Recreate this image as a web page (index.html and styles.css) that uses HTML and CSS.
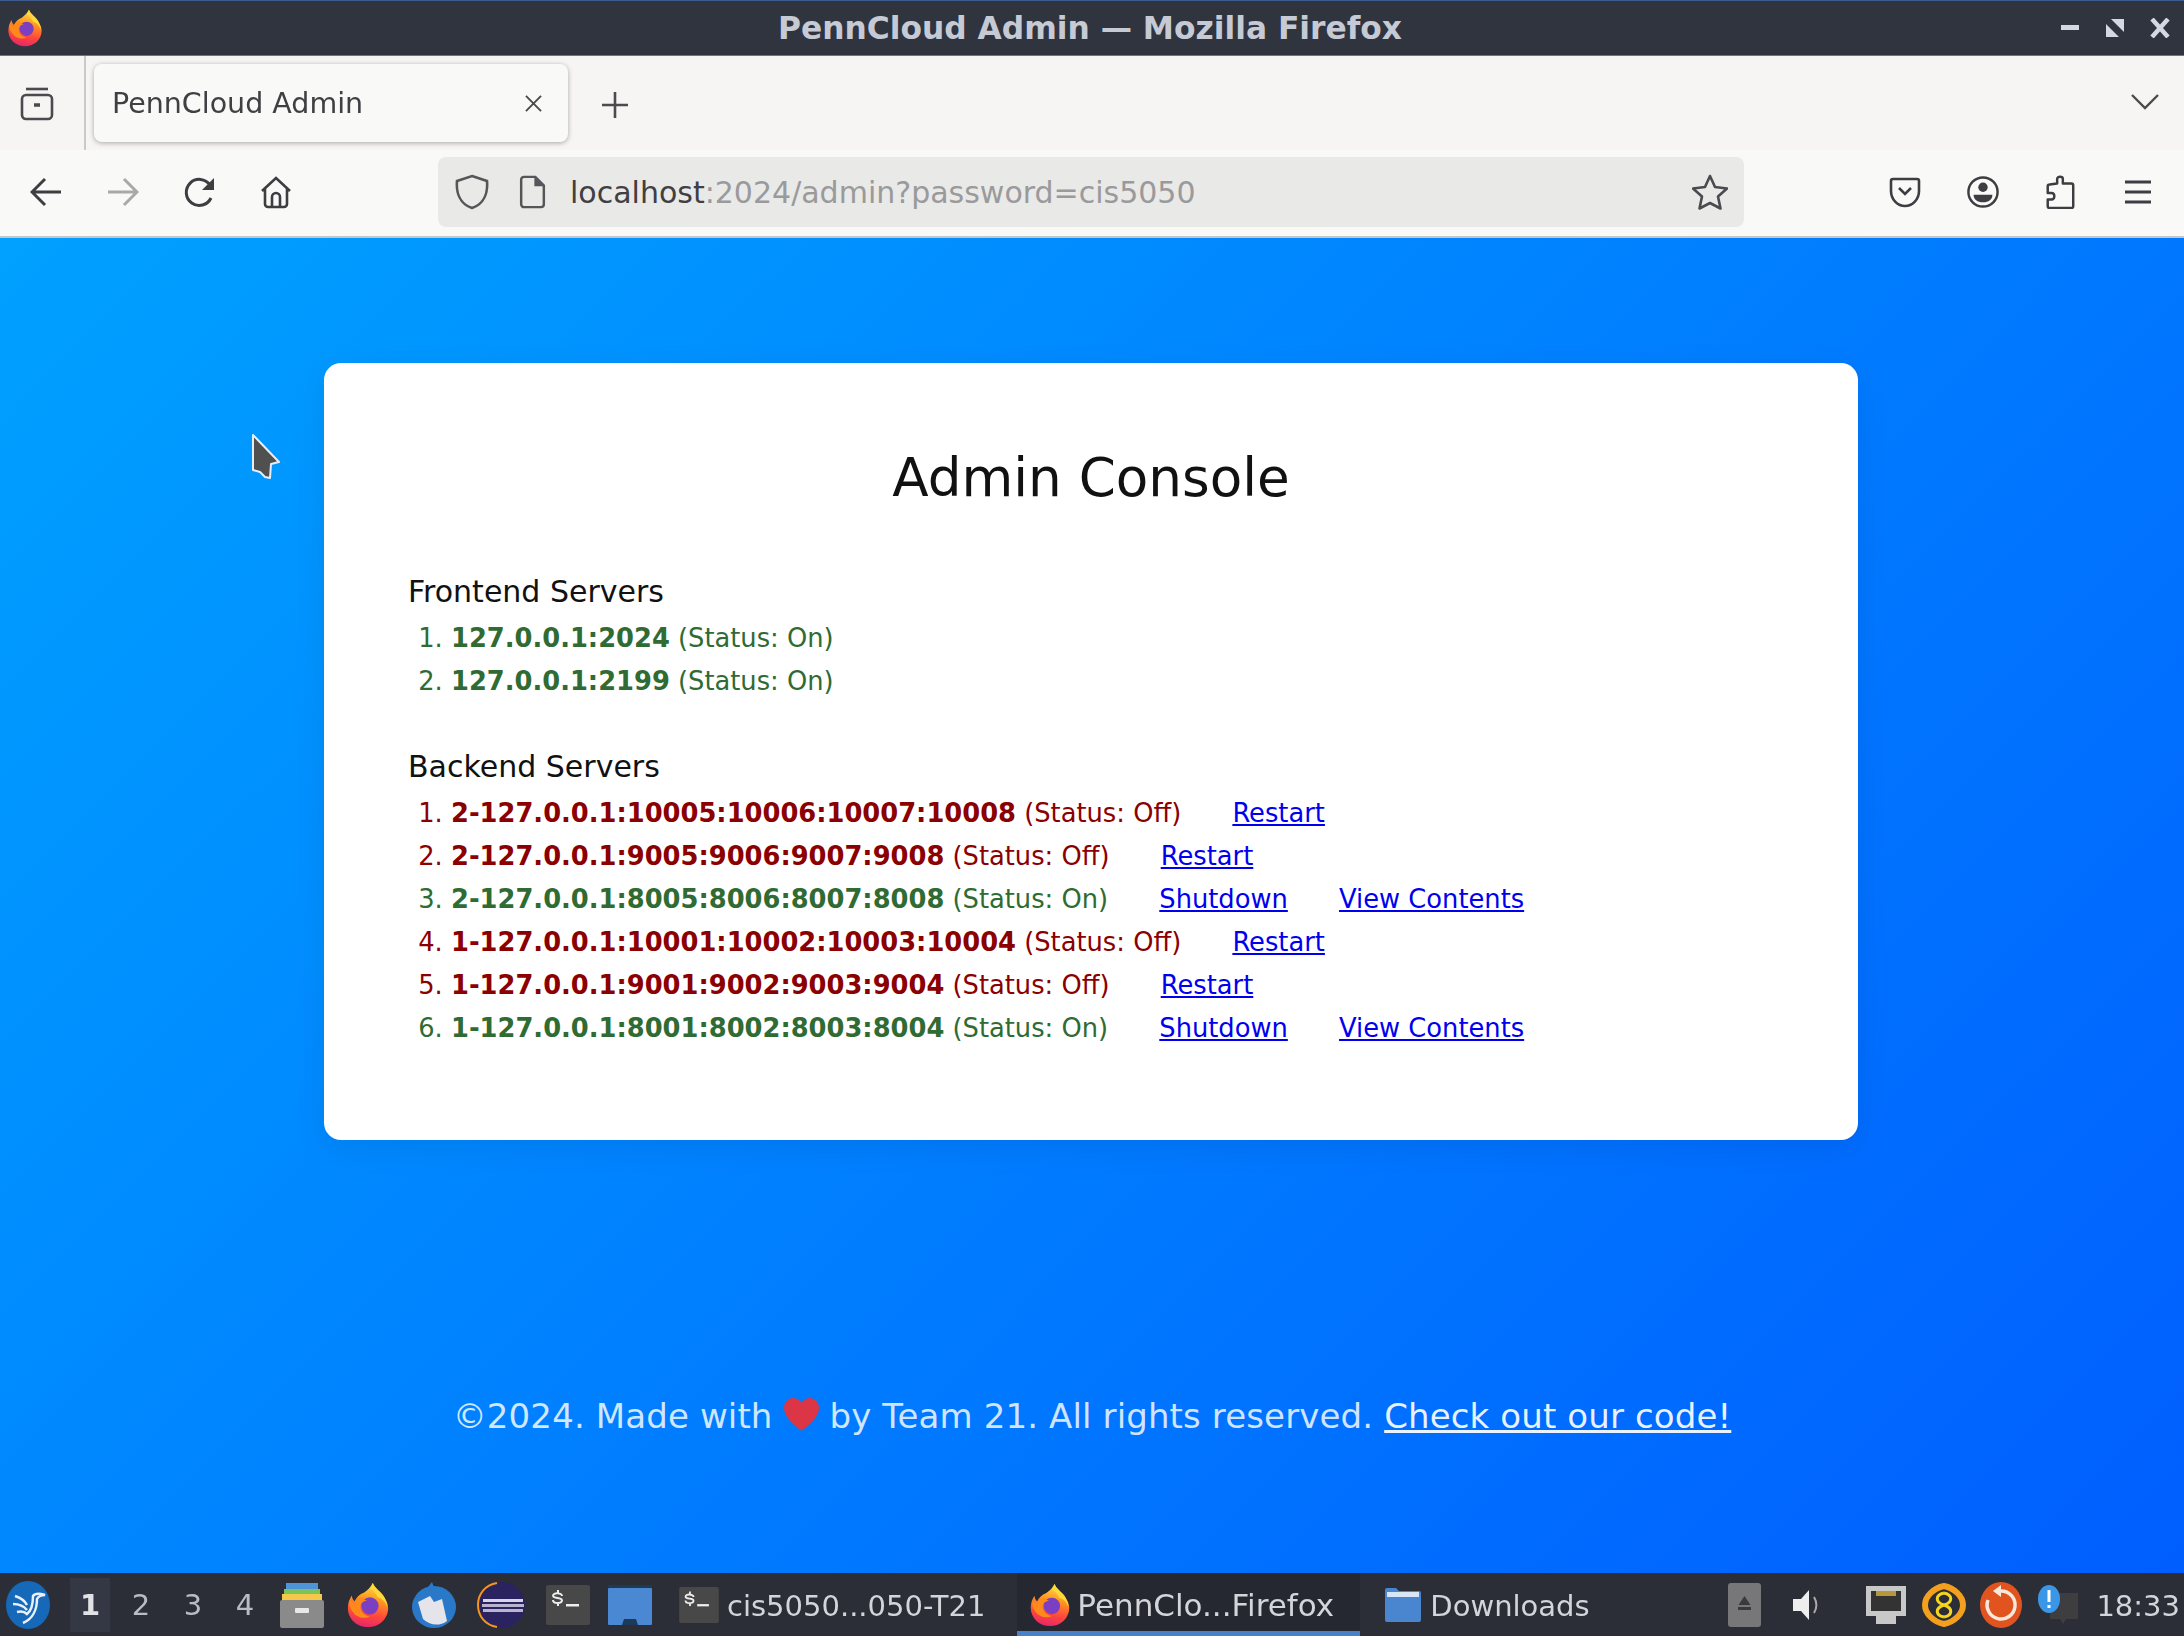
FILE: index.html
```html
<!DOCTYPE html>
<html lang="en">
<head>
<meta charset="utf-8">
<title>PennCloud Admin</title>
<link rel="stylesheet" href="styles.css">
</head>
<body>
<svg class="defs" width="0" height="0" aria-hidden="true">
  <defs>
    <linearGradient id="fxBody" x1="0.6" y1="0" x2="0.4" y2="1">
      <stop offset="0" stop-color="#ffe14a"/>
      <stop offset="0.35" stop-color="#ff9a1f"/>
      <stop offset="0.7" stop-color="#ff4a3a"/>
      <stop offset="1" stop-color="#e8246a"/>
    </linearGradient>
    <symbol id="firefox" viewBox="0 0 48 48">
      <path fill="url(#fxBody)" d="M24 47C12 47 3 38 3 27c0-5 1.500-9 4-13 .5 3 1.500 5 3 6 2-4 5-7 10-9 4-3 7-6 9-10 2 6 9 9 12 15 3 5 4 8 4 11 0 11-9 20-21 20z"/>
      <path fill="#ffd83a" d="M29 1c2 6 9 9 12 15 2 4 3 6 3 10-2-6-6-9-10-10-2-5-5-8-8-9 1-2 2-4 3-6z"/>
      <circle cx="26" cy="25" r="9" fill="#7b3fc4"/>
      <path fill="#ff8a1c" d="M5 19c2 2 3 3 5 3 1-3 3-5 7-6 2 2 4 3 6 3-3 1-6 2-7 5-1 5 3 11 10 12-6 3-14 1-18-5-3-4-4-8-3-12z"/>
    </symbol>
    <symbol id="terminal" viewBox="0 0 44 40">
      <rect x="0" y="0" width="44" height="40" rx="2" fill="#484848"/>
      <path d="M12 5v3M7 11c0-4 9-3 9 0M7 15c0 4 9 4 9 0M7 11c1 3 8 1 9 4M12 18v3" fill="none" stroke="#eee" stroke-width="2"/>
      <rect x="20" y="19" width="13" height="2.500" fill="#eee"/>
    </symbol>
    <symbol id="folder" viewBox="0 0 38 36">
      <path fill="#4a86cf" d="M1 3a2 2 0 0 1 2-2h9l3 3h20a2 2 0 0 1 2 2v27a2 2 0 0 1-2 2H3a2 2 0 0 1-2-2z"/>
      <rect x="3" y="5" width="32" height="5" fill="#d9e6f5"/>
    </symbol>
  </defs>
</svg>
<div class="window">
  <header class="titlebar">
    <svg class="title-logo"><use href="#firefox"/></svg>
    <h2 class="title-text">PennCloud Admin — Mozilla Firefox</h2>
    <div class="win-controls">
      <svg class="win-btn" viewBox="0 0 20 20"><rect x="1" y="7" width="18" height="5" fill="#d3d8e2"/></svg>
      <svg class="win-btn" viewBox="0 0 20 20"><path fill="#d3d8e2" d="M6 1h13v13zM1 6l13 13H1z"/></svg>
      <svg class="win-btn" viewBox="0 0 20 20"><path stroke="#d3d8e2" stroke-width="4.500" d="M2 1l16 18M18 1L2 19"/></svg>
    </div>
  </header>

  <div class="tabbar">
    <div class="tab-side">
      <svg class="ico" viewBox="0 0 34 34" fill="none" stroke="#4a4a4f" stroke-width="2.600"><path d="M6 3h22"/><rect x="2" y="9" width="30" height="24" rx="4"/><path d="M14 19h6" stroke-width="3.500"/></svg>
    </div>
    <div class="tab">
      <span class="tab-title">PennCloud Admin</span>
      <svg class="tab-close" viewBox="0 0 18 18" stroke="#4a4a4f" stroke-width="2"><path d="M1 1l16 16M17 1L1 17"/></svg>
    </div>
    <svg class="tab-new" viewBox="0 0 28 28" stroke="#4a4a4f" stroke-width="2.600"><path d="M14 1v26M1 14h26"/></svg>
    <svg class="tab-list" viewBox="0 0 28 16" fill="none" stroke="#4a4a4f" stroke-width="2.400"><path d="M1 1l13 13L27 1"/></svg>
  </div>

  <nav class="navbar">
    <svg class="nav-ico back" viewBox="0 0 32 32" fill="none" stroke="#3d3d42" stroke-width="3"><path d="M31 16H3M15 3L2 16l13 13"/></svg>
    <svg class="nav-ico fwd" viewBox="0 0 32 32" fill="none" stroke="#a9a9ab" stroke-width="3"><path d="M1 16h28M17 3l13 13-13 13"/></svg>
    <svg class="nav-ico reload" viewBox="0 0 32 32" fill="none" stroke="#3d3d42" stroke-width="3"><path d="M27 22a13 13 0 1 1-1-13"/><path fill="#3d3d42" stroke="none" d="M30 2v12H18z"/></svg>
    <svg class="nav-ico home" viewBox="0 0 32 32" fill="none" stroke="#3d3d42" stroke-width="2.600"><path d="M2 15L16 2l14 13M5 12v16a3 3 0 0 0 3 3h16a3 3 0 0 0 3-3V12M12 31V21a4 4 0 0 1 8 0v10"/></svg>
    <div class="urlbar">
      <svg class="url-shield" viewBox="0 0 34 36" fill="none" stroke="#55555a" stroke-width="2.600"><path d="M17 2l15 5c1 12-3 23-15 27C5 30 1 19 2 7z"/></svg>
      <svg class="url-page" viewBox="0 0 28 36" fill="none" stroke="#55555a" stroke-width="2.600"><path d="M2 5a3 3 0 0 1 3-3h12l9 9v20a3 3 0 0 1-3 3H5a3 3 0 0 1-3-3z"/><path fill="#55555a" stroke="none" d="M16 2l10 10H16z"/></svg>
      <span class="url-text"><span class="url-host">localhost</span>:2024/admin?password=cis5050</span>
      <svg class="url-star" viewBox="0 0 36 36" fill="none" stroke="#4a4a4f" stroke-width="2.600" stroke-linejoin="round"><path d="M18 2l5 11 12 1.500-9 8 2.500 12L18 29 7.500 34.500 10 22.500l-9-8L13 13z"/></svg>
    </div>
    <div class="nav-right">
      <svg class="nav-ico" viewBox="0 0 32 32" fill="none" stroke="#3d3d42" stroke-width="2.600"><path d="M4 3h24a2 2 0 0 1 2 2v10c0 9-7 15-14 15S2 24 2 15V5a2 2 0 0 1 2-2z"/><path d="M10 12l6 6 6-6"/></svg>
      <svg class="nav-ico" viewBox="0 0 34 34" fill="none" stroke="#3d3d42" stroke-width="2.600"><circle cx="17" cy="17" r="15.500"/><circle cx="17" cy="12" r="5" fill="#3d3d42" stroke="none"/><path fill="#3d3d42" stroke="none" d="M7 20h20c0 5-4 8-10 8S7 25 7 20z"/></svg>
      <svg class="nav-ico" viewBox="0 0 30 36" fill="none" stroke="#3d3d42" stroke-width="2.600" stroke-linejoin="round"><path d="M12 9V4c0-3 6-3 6 0v5h9a2 2 0 0 1 2 2v22a2 2 0 0 1-2 2H4a2 2 0 0 1-2-2v-7h4c4 0 4-7 0-7H2v-7a2 2 0 0 1 2-2z"/></svg>
      <svg class="nav-ico" viewBox="0 0 32 32" stroke="#3d3d42" stroke-width="3"><path d="M3 6h26M3 16h26M3 26h26"/></svg>
    </div>
  </nav>

  <main class="page">
    <svg class="cursor" viewBox="0 0 30 48"><path fill="#505050" stroke="#e8eef5" stroke-width="2" stroke-linejoin="round" d="M2 2l26 27-8 2-1 14-5-1-5-5-7-2z"/></svg>
    <section class="card">
      <h1 class="card-title">Admin Console</h1>
      <h3 class="group-title">Frontend Servers</h3>
      <ol class="servers">
        <li class="on"><b>127.0.0.1:2024</b> (Status: On)</li>
        <li class="on"><b>127.0.0.1:2199</b> (Status: On)</li>
      </ol>
      <h3 class="group-title">Backend Servers</h3>
      <ol class="servers">
        <li class="off"><b>2-127.0.0.1:10005:10006:10007:10008</b> (Status: Off) <a href="#" class="action">Restart</a></li>
        <li class="off"><b>2-127.0.0.1:9005:9006:9007:9008</b> (Status: Off) <a href="#" class="action">Restart</a></li>
        <li class="on"><b>2-127.0.0.1:8005:8006:8007:8008</b> (Status: On) <a href="#" class="action">Shutdown</a> <a href="#" class="action">View Contents</a></li>
        <li class="off"><b>1-127.0.0.1:10001:10002:10003:10004</b> (Status: Off) <a href="#" class="action">Restart</a></li>
        <li class="off"><b>1-127.0.0.1:9001:9002:9003:9004</b> (Status: Off) <a href="#" class="action">Restart</a></li>
        <li class="on"><b>1-127.0.0.1:8001:8002:8003:8004</b> (Status: On) <a href="#" class="action">Shutdown</a> <a href="#" class="action">View Contents</a></li>
      </ol>
    </section>
    <footer class="page-foot">©2024. Made with <svg class="heart" viewBox="0 0 32 30"><path fill="#dc3545" d="M16 30C6 22 0 16 0 9c0-5 4-9 8.500-9C12 0 14.500 2 16 5c1.500-3 4-5 7.500-5C28 0 32 4 32 9c0 7-6 13-16 21z"/></svg> by Team 21. All rights reserved. <a href="#" class="foot-link">Check out our code!</a></footer>
  </main>

  <div class="taskbar">
    <svg class="t-logo" viewBox="0 0 46 50"><ellipse cx="23" cy="25" rx="22" ry="24" fill="#1668b8"/><path fill="none" stroke="#e8f0fa" stroke-width="2.500" d="M10 16c6 2 10 5 12 9M8 24c6 0 11 2 14 6M12 32c4-1 8 0 10 2 4-3 6-10 6-18 2-3 6-3 12-1-4 0-7 2-8 4 0 10-4 20-14 24"/></svg>
    <div class="ws ws-active">1</div>
    <div class="ws">2</div>
    <div class="ws">3</div>
    <div class="ws">4</div>
    <svg class="t-app t-cab" viewBox="0 0 44 46"><rect x="6" y="1" width="32" height="8" fill="#4f94d8"/><rect x="4" y="7" width="36" height="7" fill="#7cc35a"/><rect x="2" y="12" width="40" height="7" fill="#f5c84a"/><rect x="0" y="18" width="44" height="28" rx="2" fill="#8a8a8a"/><rect x="15" y="26" width="14" height="5" rx="1" fill="#e8e8e8"/></svg>
    <svg class="t-app t-fx"><use href="#firefox"/></svg>
    <svg class="t-app t-bird" viewBox="0 0 44 46"><ellipse cx="22" cy="25" rx="22" ry="21" fill="#2a79c9"/><path fill="#2a79c9" d="M12 10l8-10 3 8z"/><path fill="#e4e4ea" d="M6 20l12-6 4 6 8-3 5 22c-8 6-18 4-24-2z"/></svg>
    <svg class="t-app t-ecl" viewBox="0 0 48 46"><circle cx="25" cy="23" r="23" fill="#2b2360"/><path fill="none" stroke="#f7941e" stroke-width="2" d="M20 1C8 3 1 12 1 23s7 20 19 22"/><rect x="6" y="17" width="40" height="3" fill="#d8d4e8"/><rect x="5" y="22" width="42" height="3" fill="#b8b4d0"/><rect x="6" y="27" width="40" height="3" fill="#b8b4d0"/></svg>
    <svg class="t-app t-term"><use href="#terminal"/></svg>
    <svg class="t-app t-desk" viewBox="0 0 44 40"><rect y="0" width="44" height="3" fill="#203a52"/><rect y="3" width="44" height="37" rx="1" fill="#4a88d4"/><path fill="#1d3a5a" d="M14 40l2-6h12l2 6z"/></svg>
    <div class="task task-term">
      <svg class="task-ico-term"><use href="#terminal"/></svg>
      <span class="task-label">cis5050...050-T21</span>
    </div>
    <div class="task task-active">
      <svg class="task-ico-fx"><use href="#firefox"/></svg>
      <span class="task-label task-label-wide">PennClo...Firefox</span>
    </div>
    <div class="task task-dl">
      <svg class="task-ico-dl"><use href="#folder"/></svg>
      <span class="task-label">Downloads</span>
    </div>
    <div class="tray">
      <svg class="tray-eject" viewBox="0 0 33 44"><rect width="33" height="44" rx="3" fill="#77777a"/><path fill="#3a3a3e" d="M16.500 13l6 9h-12z"/><rect x="10" y="24" width="13" height="3" fill="#3a3a3e"/></svg>
      <svg class="tray-spk" viewBox="0 0 31 36"><path fill="#eee" d="M2 12h8l8-9v30l-8-9H2z"/><path fill="none" stroke="#aaa" stroke-width="2" d="M23 10c3 5 3 11 0 16"/></svg>
      <svg class="tray-net" viewBox="0 0 44 42"><path fill="#c8c8c8" d="M2 2h40v30H32v8H12v-8H2z"/><rect x="7" y="7" width="30" height="20" fill="#333"/><rect x="12" y="7" width="20" height="5" fill="#b8963a"/></svg>
      <svg class="tray-sync" viewBox="0 0 44 46"><path fill="none" stroke="#f2a01d" stroke-width="6" d="M22 4c10 2 19 10 19 19s-9 17-19 19C12 40 3 32 3 23S12 6 22 4z"/><path fill="none" stroke="#f5d51d" stroke-width="3" d="M22 11c9 2 9 9 0 12s-9 10 0 12M22 11c-9 2-9 9 0 12s9 10 0 12"/></svg>
      <svg class="tray-upd" viewBox="0 0 42 46"><ellipse cx="21" cy="23" rx="21" ry="23" fill="#e2541f"/><path fill="none" stroke="#f7e8dc" stroke-width="3.500" d="M21 9a14 14 0 1 1-13 9"/><path fill="#f7e8dc" d="M21 3v12l-8-6z"/></svg>
      <svg class="tray-msg" viewBox="0 0 42 40"><path fill="#3e3e40" d="M12 8h28v26H28l-3 5-3-5H12z"/><ellipse cx="11" cy="14" rx="11" ry="14" fill="#3a97e8"/><rect x="9.500" y="5" width="3" height="12" fill="#fff"/><rect x="9.500" y="20" width="3" height="3" fill="#fff"/></svg>
      <span class="clock">18:33</span>
    </div>
  </div>
</div>
</body>
</html>
```
FILE: styles.css
```css
* { box-sizing: border-box; }
html, body { margin: 0; height: 100%; overflow: hidden; }
body { font-family: "DejaVu Sans", sans-serif; background: #2b2e37; }
.defs { position: absolute; }
svg { display: block; flex: none; }

.window { height: 1636px; display: flex; flex-direction: column; filter: blur(0.6px); }

/* Title bar */
.titlebar { height: 56px; flex: none; display: flex; align-items: center; background: #2f343f; border-top: 1px solid #3b5c8c; border-bottom: 1px solid #70737a; padding-left: 6px; }
.title-logo { width: 38px; height: 38px; }
.title-text { margin: 0 0 0 506px; width: 1080px; font-size: 31.3px; font-weight: 700; color: #c6cad4; text-align: center; line-height: 54px; }
.win-controls { margin-left: auto; display: flex; gap: 25px; padding-right: 14px; }
.win-btn { width: 20px; height: 20px; }

/* Tab strip */
.tabbar { height: 94px; flex: none; background: #f6f5f3; display: flex; align-items: flex-start; }
.tab-side { width: 86px; height: 94px; border-right: 2px solid #c9c9c9; padding: 29px 0 0 20px; }
.ico { width: 34px; height: 36px; }
.tab { width: 474px; height: 78px; margin: 8px 0 0 8px; background: #f9f9f7; border-radius: 8px; box-shadow: 0 1px 5px rgba(0,0,0,.32); display: flex; align-items: center; padding: 0 26px 0 18px; }
.tab-title { font-size: 28.5px; color: #3f3f44; flex: 1; }
.tab-close { width: 17px; height: 17px; }
.tab-new { width: 28px; height: 28px; margin: 35px 0 0 33px; }
.tab-list { width: 28px; height: 16px; margin: 38px 25px 0 auto; }

/* Nav bar */
.navbar { height: 88px; flex: none; background: #f9f9f7; border-bottom: 2px solid #c4c6c8; display: flex; align-items: center; padding: 0 0 2px 30px; }
.nav-ico { width: 32px; height: 34px; }
.fwd { margin-left: 45px; }
.reload { margin-left: 45px; }
.home { margin-left: 44px; }
.urlbar { width: 1306px; height: 70px; margin-left: 146px; background: #e9e9e7; border-radius: 8px; display: flex; align-items: center; padding: 0 16px 0 17px; }
.url-shield { width: 34px; height: 36px; }
.url-page { width: 27px; height: 34px; margin-left: 30px; }
.url-text { font-size: 30px; color: #9a9a9c; margin-left: 24px; flex: 1; }
.url-host { color: #3f3f44; }
.url-star { width: 36px; height: 36px; }
.nav-right { display: flex; align-items: center; gap: 45.7px; margin-left: 145px; }

/* Page */
.page { flex: 1; position: relative; display: flex; flex-direction: column; background: linear-gradient(135deg, #00a1ff, #005eff); }
.cursor { position: absolute; left: 251px; top: 195px; width: 30px; height: 48px; }
.card { width: 1534px; margin: 125px 0 0 324px; padding: 84px 84px 90px; background: #fff; border-radius: 17px; box-shadow: 0 8px 32px rgba(0,0,0,.08); }
.card-title { margin: 0 0 63px; font-size: 53.2px; font-weight: 400; line-height: 62px; text-align: center; color: #111; }
.group-title { margin: 0 0 5px; font-size: 30px; font-weight: 400; line-height: 40px; color: #111; }
.servers { margin: 0 0 44px; padding: 0 0 0 43px; font-size: 25.75px; line-height: 43px; }
.servers:last-child { margin-bottom: 0; }
.on { color: #2f6b32; }
.off { color: #8b0000; }
.action { color: #0000ee; margin-left: 43px; }
.page-foot { margin-top: auto; padding: 0 0 132px; text-align: center; font-size: 34px; line-height: 50px; color: rgba(255,255,255,.82); letter-spacing: .13px; }
.heart { display: inline-block; width: 35px; height: 33px; vertical-align: -3px; }
.foot-link { color: rgba(255,255,255,.92); }

/* Taskbar */
.taskbar { height: 63px; flex: none; background: #2b2e37; display: flex; align-items: center; padding-left: 5px; color: #d3d5da; }
.t-logo { width: 46px; height: 50px; }
.ws { width: 52px; font-size: 29px; text-align: center; color: #b9bcc4; }
.ws-active { width: 40px; height: 54px; margin-left: 19px; margin-right: 5px; background: #343845; line-height: 54px; font-weight: 700; color: #e0e2e6; }
.t-app { height: 44px; }
.t-cab { width: 44px; height: 46px; margin-left: 9px; }
.t-fx { width: 46px; height: 46px; margin-left: 21px; }
.t-bird { width: 44px; height: 46px; margin-left: 21px; }
.t-ecl { width: 48px; height: 46px; margin-left: 21px; }
.t-term { width: 44px; height: 40px; margin-left: 21px; }
.t-desk { width: 44px; height: 40px; margin-left: 18px; }
.task { display: flex; align-items: center; font-size: 29px; height: 63px; }
.task-label { padding-top: 3px; }
.task-label-wide { font-size: 31px; padding-top: 0; }
.task-term { margin-left: 26px; }
.task-ico-term { width: 42px; height: 36px; margin-right: 7px; }
.task-active { margin-left: 32px; width: 343px; background: linear-gradient(#252830 92%, #4a80c8 92%); padding: 0 0 0 11px; }
.task-ico-fx { width: 44px; height: 50px; margin-right: 5px; }
.task-dl { margin-left: 24px; }
.task-ico-dl { width: 38px; height: 36px; margin-right: 8px; }
.tray { margin-left: auto; display: flex; align-items: center; }
.tray-eject { width: 33px; height: 44px; }
.tray-spk { width: 31px; height: 36px; margin-left: 30px; }
.tray-net { width: 44px; height: 42px; margin-left: 42px; }
.tray-sync { width: 44px; height: 46px; margin-left: 14px; }
.tray-upd { width: 42px; height: 46px; margin-left: 14px; }
.tray-msg { width: 42px; height: 40px; margin-left: 16px; }
.clock { font-size: 29px; margin: 0 4px 0 16px; padding-top: 2px; }
```
